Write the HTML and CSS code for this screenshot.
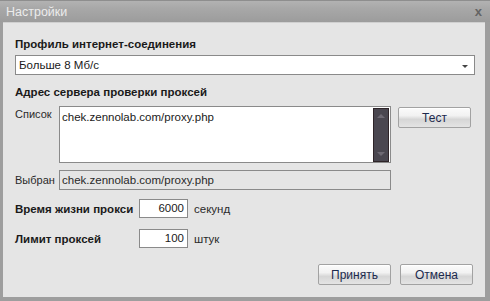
FILE: index.html
```html
<!DOCTYPE html>
<html lang="ru">
<head>
    <meta charset="UTF-8">
    <title>Настройки</title>
    <link rel="stylesheet" href="styles.css">
</head>
<body>
    <div class="window">
        <div class="titlebar">
            <span class="title">Настройки</span>
            <span class="close">x</span>
        </div>

        <div class="content">
            <div class="heading">Профиль интернет-соединения</div>
            <div class="select">
                <span>Больше 8 Мб/с</span>
                <span class="arrow"></span>
            </div>

            <div class="heading second">Адрес сервера проверки проксей</div>
            <div class="list-row">
                <div class="label top">Список</div>
                <div class="listbox">
                    <div class="list-text">chek.zennolab.com/proxy.php</div>
                    <div class="scrollbar">
                        <span class="sb-up"></span>
                        <span class="sb-down"></span>
                    </div>
                </div>
                <button class="btn test">Тест</button>
            </div>

            <div class="field-row">
                <div class="label">Выбран</div>
                <div class="readonly">chek.zennolab.com/proxy.php</div>
            </div>

            <div class="num-row">
                <div class="num-label">Время жизни прокси</div>
                <div class="num-input">6000</div>
                <div class="unit">секунд</div>
            </div>
            <div class="num-row limit">
                <div class="num-label">Лимит проксей</div>
                <div class="num-input">100</div>
                <div class="unit">штук</div>
            </div>

            <div class="actions">
                <button class="btn">Принять</button>
                <button class="btn">Отмена</button>
            </div>
        </div>
    </div>
</body>
</html>
```

FILE: styles.css
```css
* {
    margin: 0;
    padding: 0;
    box-sizing: border-box;
}

body {
    font-family: "Liberation Sans", Arial, sans-serif;
    font-size: 11.5px;
    color: #1a1a1a;
    background: #9c9c9c;
}

.window {
    width: 490px;
    height: 301px;
    display: flex;
    flex-direction: column;
    background: #9e9e9e;
    padding: 0 5px 4px 3px;
}

.titlebar {
    height: 22px;
    display: flex;
    align-items: center;
    justify-content: space-between;
    margin: 0 -5px 0 -3px;
    padding: 0 8px 0 6px;
    background: linear-gradient(#b2b2b2 0%, #a8a8a8 35%, #9c9c9c 100%);
    border-top: 1px solid #8e8e8e;
}

.title {
    font-size: 12.5px;
    color: #ececec;
    line-height: 16px;
}

.close {
    font-size: 13px;
    font-weight: bold;
    color: #646464;
    line-height: 12px;
}

.content {
    flex: 1;
    background: #e5e5e5;
    padding: 14px 10px 0 12px;
    border-top: 1px solid #d0d0d0;
}

.heading {
    font-weight: bold;
    font-size: 11.5px;
    line-height: 14px;
    color: #1a1a1a;
    margin-bottom: 4px;
}

.heading.second {
    margin-top: 10px;
    margin-bottom: 7px;
}

.select {
    height: 20px;
    width: 460px;
    display: flex;
    align-items: center;
    justify-content: space-between;
    padding: 0 6px 0 3px;
    background: #fff;
    border: 1px solid #8a8a8a;
    line-height: 14px;
}

.arrow {
    width: 0;
    height: 0;
    border-left: 3px solid transparent;
    border-right: 3px solid transparent;
    border-top: 3px solid #444;
    position: relative;
    top: 1px;
}

.list-row {
    display: flex;
    align-items: flex-start;
}

.label {
    width: 44px;
    font-size: 11px;
    line-height: 14px;
    color: #2a2a2a;
}

.label.top {
    padding-top: 1px;
}

.listbox {
    width: 332px;
    height: 57px;
    display: flex;
    justify-content: space-between;
    background: #fff;
    border: 1px solid #8a8a8a;
    padding: 1px 1px 0 2px;
}

.list-text {
    line-height: 14px;
    padding-top: 2px;
}

.scrollbar {
    width: 16px;
    height: 54px;
    display: flex;
    flex-direction: column;
    justify-content: space-between;
    align-items: center;
    padding: 5px 0 5px;
    background: #4a4750;
    border: 1px solid #2e2428;
}

.sb-up, .sb-down {
    width: 0;
    height: 0;
    border-left: 4px solid transparent;
    border-right: 4px solid transparent;
}

.sb-up {
    border-bottom: 4px solid #6e6a74;
}

.sb-down {
    border-top: 4px solid #6e6a74;
}

.btn {
    height: 21px;
    width: 73px;
    font-family: "Liberation Sans", Arial, sans-serif;
    font-size: 12px;
    color: #1c2a4e;
    border: 1px solid #a2a2a2;
    border-radius: 2px;
    background: linear-gradient(#fbfbfb 0%, #f2f2f2 40%, #d6d6d6 60%, #e4e4e4 100%);
    box-shadow: inset 0 1px 0 #fff;
}

.btn.test {
    margin: 1px 0 0 7px;
}

.field-row {
    display: flex;
    align-items: center;
    margin-top: 7px;
}

.readonly {
    width: 332px;
    height: 20px;
    line-height: 18px;
    padding-left: 2px;
    border: 1px solid #8a8a8a;
    background: #e5e5e5;
    color: #2a2a2a;
}

.num-row {
    display: flex;
    align-items: center;
    margin-top: 9px;
}

.num-row.limit {
    margin-top: 11px;
}

.num-label {
    width: 124px;
    font-weight: bold;
    font-size: 11.5px;
    color: #1a1a1a;
}

.num-input {
    width: 49px;
    height: 19px;
    line-height: 17px;
    text-align: right;
    padding-right: 3px;
    background: #fff;
    border: 1px solid #8a8a8a;
}

.unit {
    margin-left: 6px;
    color: #2a2a2a;
}

.actions {
    display: flex;
    justify-content: flex-end;
    gap: 9px;
    margin-top: 16px;
    padding-right: 2px;
}
```
